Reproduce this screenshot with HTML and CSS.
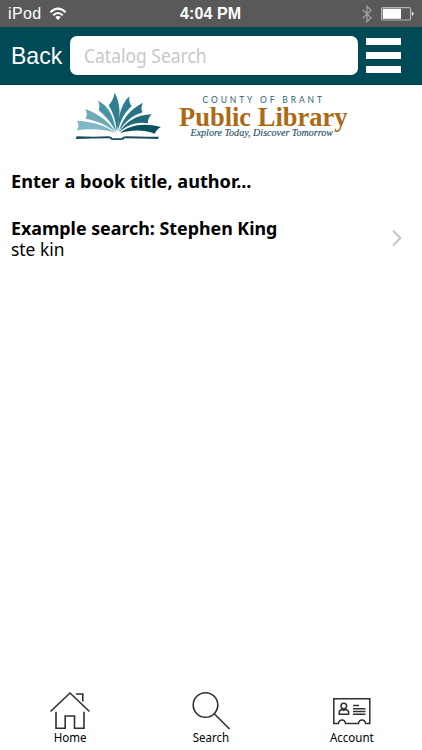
FILE: index.html
```html
<!DOCTYPE html>
<html lang="en">
<head>
<meta charset="utf-8">
<title>Catalog Search</title>
<link rel="stylesheet" href="styles.css">
</head>
<body>
<div class="status">
  <span class="device">iPod</span>
  <svg class="wifi" width="18" height="14" viewBox="0 0 18 14" fill="none" stroke="#fff" stroke-width="2"><path d="M1.4 5.2Q9-2 16.6 5.2M4.2 8.2Q9 3.7 13.8 8.2"/><path d="M6.3 10.2Q9 7.8 11.7 10.2L9 13Z" fill="#fff" stroke="none"/></svg>
  <span class="time">4:04 PM</span>
  <svg class="bluetooth" width="10" height="18" viewBox="0 0 10 18" fill="none" stroke="#a0a0a0" stroke-width="1.3"><path d="M.7 4.8 9 12.8 5 16.7V1.3L9 5.2.7 13.2"/></svg>
  <svg class="battery" width="34" height="14" viewBox="0 0 34 14"><rect x=".6" y=".6" width="29" height="12.4" rx="1.6" fill="none" stroke="#b5b5b5" stroke-width="1.2"/><rect x="1.8" y="1.8" width="18.2" height="10" fill="#fff"/><path d="M30.8 4.5q2 .8 2 2.3t-2 2.3z" fill="#d5d5d5"/></svg>
</div>
<header class="bar">
  <span class="back">Back</span>
  <div class="field"><span class="hint">Catalog Search</span></div>
  <div class="menu"><i></i><i></i><i></i></div>
</header>
<main>
  <svg class="logo" width="422" height="62" viewBox="0 84 422 62">
    <g transform="translate(70 86) scale(.3333)">
      <path fill="#7fb9c6" d="M137 141C108 119 74 108 21 104Q30 119 20 133C66 127 105 130 137 141Z"/>
      <path fill="#6dabb9" d="M137 139C119 110 92 87 46 69Q54 84 47 98C84 105 113 118 137 139Z"/>
      <path fill="#4994a4" d="M138 137C132 97 119 61 84 44Q91 59 86 72C108 91 125 112 138 137Z"/>
      <path fill="#307f8e" d="M140 137C151 92 154 57 134 20Q129 44 116 58C131 83 138 109 140 137Z"/>
      <path fill="#2b7f90" d="M143 137C145 103 148 60 178 31Q176 49 185 61C164 79 151 104 143 137Z"/>
      <path fill="#287384" d="M146 137C157 104 175 72 219 50Q210 67 218 79C185 89 164 109 146 137Z"/>
      <path fill="#1e6b7b" d="M148 138C168 108 199 86 245 85Q232 99 234 112C199 105 169 119 148 138Z"/>
      <path fill="#075160" d="M150 141C178 119 218 109 273 123Q257 132 255 143C218 129 181 132 150 141Z"/>
      <path fill="#174d60" d="M20 151Q72 153 116 151Q124 151 127 157H155Q158 151 168 151Q219 153 267 152L264 159Q205 157 165 157Q162 162 153 162H130Q121 162 119 157Q73 157 17 159Z"/>
      <path fill="#fff" d="M117 150Q132 139 142 144Q153 139 166 150Q157 150 152 156H131Q127 150 117 150Z"/>
    </g>
    <text class="county" x="202.5" y="102.6" textLength="119.5">COUNTY OF BRANT</text>
    <text class="library" x="179" y="126" textLength="168.5" lengthAdjust="spacingAndGlyphs">Public Library</text>
    <text class="slogan" x="190.5" y="135.6" textLength="142.5" lengthAdjust="spacingAndGlyphs">Explore Today, Discover Tomorrow</text>
  </svg>
  <h1 class="prompt"><span class="fit-prompt">Enter a book title, author...</span></h1>
  <div class="row">
    <div class="example">
      <b class="fit-title">Example search: Stephen King</b>
      <span class="fit-sub">ste kin</span>
    </div>
    <svg width="12" height="18" viewBox="0 0 12 18" fill="none" stroke="#c5c5ca" stroke-width="2.1"><path d="M2 1.5 9.3 9 2 16.5"/></svg>
  </div>
</main>
<nav class="tabs">
  <div class="tab"><svg width="42" height="40" viewBox="0 0 42 40" fill="none" stroke="#303030" stroke-width="1.6"><path d="M1.5 21.5 21 3 40.5 21.5M27 4H33.8V11.5M7 21.7V38.3H16.2V26H25.5V38.3H35V21.7"/></svg><span class="label">Home</span></div>
  <div class="tab"><svg width="42" height="40" viewBox="0 0 42 40" fill="none" stroke="#303030" stroke-width="1.6"><circle cx="15.5" cy="15" r="12.3"/><path d="M24.5 24 39.5 39"/></svg><span class="label">Search</span></div>
  <div class="tab"><svg width="42" height="40" viewBox="0 -1.5 42 40" fill="none" stroke="#303030" stroke-width="1.5"><path d="M2.8 7.2H38.8V32H34.5Q34 28.5 31 28.5T27.5 32H14.5Q14 28.5 11 28.5T7.5 32H2.8Z"/><circle cx="12.8" cy="14.5" r="2.8"/><path d="M8.2 22.7V21Q8.2 18.6 11 18L12.8 19 14.6 18Q17.6 18.6 17.6 21V22.7ZM22 14H28M22 17.2H34.5M22 20H34.5M22 22.8H34.5"/></svg><span class="label">Account</span></div>
</nav>
</body>
</html>
```
FILE: styles.css
```css
* { box-sizing: border-box; }
body {
  margin: 0;
  width: 422px;
  height: 750px;
  display: flex;
  flex-direction: column;
  background: #fff;
  color: #000;
  font-family: "Noto Sans", "Open Sans", sans-serif;
  overflow: hidden;
}
svg { display: block; flex: none; }
.status {
  height: 27px;
  flex: none;
  display: grid;
  grid-template-columns: 41px 130px 1fr 19px 41px;
  align-items: center;
  padding-left: 8px;
  background: #595959;
  color: #fff;
  font: 16px/27px "Liberation Sans", Arial, sans-serif;
}
.device { letter-spacing: .35px; }
.time { font-weight: bold; letter-spacing: .1px; padding-left: 1px; }
.bar {
  height: 57.5px;
  flex: none;
  display: flex;
  align-items: center;
  padding-left: 11px;
  background: #004957;
}
.back {
  width: 59px;
  color: #fff;
  font: 24px/30px "Liberation Sans", Arial, sans-serif;
  white-space: nowrap;
  transform: scaleX(.96);
  transform-origin: left center;
}
.field {
  width: 288px;
  height: 39px;
  display: flex;
  align-items: center;
  padding-left: 14px;
  border-radius: 7px;
  background: #fff;
}
.hint { color: #c7c7cc; font-size: 19px; line-height: 26px; white-space: nowrap; transform: scaleX(.92); }
.menu { width: 35px; margin-left: 8px; display: grid; gap: 7px; }
.menu i { height: 7px; background: #fff; }
main { flex: 1; }
.logo { margin-top: -.5px; }
.county { font: 8.5px Lato, sans-serif; fill: #315f73; }
.library { font: bold 27.5px "Liberation Serif", serif; fill: #ad6914; }
.slogan { font: italic 11px "Liberation Serif", serif; fill: #284f62; stroke: #284f62; stroke-width: .15px; }
.prompt { margin: 22px 0 0 11px; font-size: 18px; line-height: 26px; }
.row { display: flex; align-items: center; justify-content: space-between; margin: 24px 19px 0 11px; }
.row svg { margin-bottom: 3px; }
.example { display: grid; justify-items: start; font-size: 18px; line-height: 21px; white-space: nowrap; }
.fit-prompt, .fit-title, .fit-sub, .hint { display: inline-block; transform-origin: left center; }
.fit-prompt { transform: scaleX(1.007); }
.fit-title { transform: scaleX(.99); }
.fit-sub { transform: scaleX(.965); }
.tabs { height: 60px; flex: none; display: grid; grid-template-columns: repeat(3, 1fr); }
.tab { display: flex; flex-direction: column; align-items: center; }
.label { font-size: 12px; line-height: 16px; transform: scaleX(.96); }
```
